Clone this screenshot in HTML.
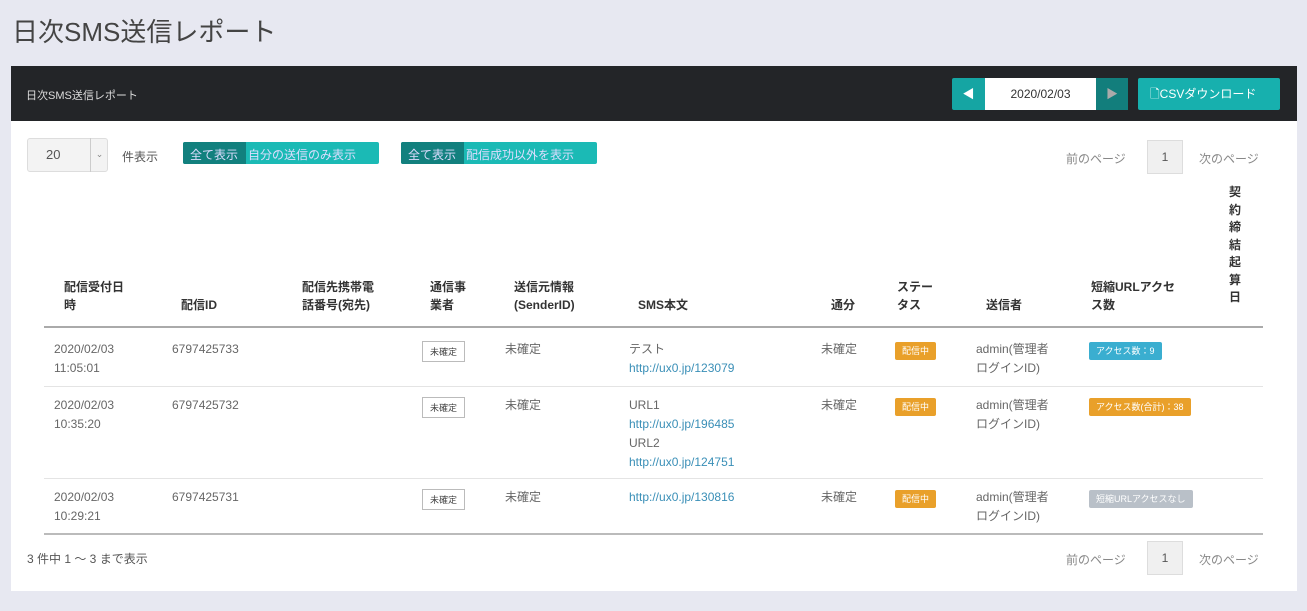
<!DOCTYPE html><html><head><meta charset="utf-8"><style>
*{margin:0;padding:0;box-sizing:border-box}
body{width:1307px;height:611px;background:#e7e8f1;font-family:"Liberation Sans","Noto Sans CJK JP",sans-serif;position:relative;overflow:hidden;color:#555}
.a{position:absolute;white-space:nowrap}
.h{font-size:12px;font-weight:bold;color:#333;line-height:18px}
.c{font-size:12px;color:#666;line-height:19px}
.l{color:#3a8fb7}
.b{font-size:9px;color:#fff;padding:3px 7px;border-radius:2px;line-height:12px}
.tag{font-size:9px;border:1px solid #bbb;padding:3px 7px;background:#fff;color:#444}
</style></head><body>
<div class="a" style="left:12px;top:12px;font-size:26px;color:#444">日次SMS送信レポート</div>
<div class="a" style="left:11px;top:66px;width:1286px;height:525px;background:#fff"></div>
<div class="a" style="left:11px;top:66px;width:1286px;height:55px;background:#232528"></div>
<div class="a" style="left:26px;top:87px;font-size:11px;color:#ddd">日次SMS送信レポート</div>
<div class="a" style="left:952px;top:78px;width:176px;height:32px;background:#15a5a3;border-radius:2px"></div>
<div class="a" style="left:952px;top:78px;width:33px;height:32px;color:#fff;font-size:12px;line-height:32px;text-align:center">◀</div>
<div class="a" style="left:985px;top:78px;width:111px;height:32px;background:#fff;font-size:12px;color:#333;text-align:center;line-height:32px">2020/02/03</div>
<div class="a" style="left:1096px;top:78px;width:32px;height:32px;background:#127e7c;color:#aaa;font-size:12px;line-height:32px;text-align:center">▶</div>
<div class="a" style="left:1138px;top:78px;width:142px;height:32px;background:#17b0ae;border-radius:2px;color:#fff;font-size:12px;line-height:32px;padding-left:12px">🗋CSVダウンロード</div>
<div class="a" style="left:27px;top:138px;width:81px;height:34px;background:#f3f3f3;border:1px solid #ddd;border-radius:3px;font-size:13px;line-height:32px;padding-left:18px;color:#555">20</div>
<div class="a" style="left:90px;top:138px;width:18px;height:34px;border-left:1px solid #ccc;font-size:9px;line-height:32px;text-align:center;color:#888">⌄</div>
<div class="a" style="left:122px;top:148px;font-size:12px">件表示</div>
<div class="a" style="left:183px;top:142px;width:196px;height:22px;background:#1bbab5;border-radius:2px"></div>
<div class="a" style="left:183px;top:142px;width:63px;height:22px;background:#12807e;border-radius:2px 0 0 2px"></div>
<div class="a" style="left:190px;top:146px;font-size:12px;color:#ddf">全て表示&nbsp;&nbsp;&nbsp;自分の送信のみ表示</div>
<div class="a" style="left:401px;top:142px;width:196px;height:22px;background:#1bbab5;border-radius:2px"></div>
<div class="a" style="left:401px;top:142px;width:63px;height:22px;background:#12807e;border-radius:2px 0 0 2px"></div>
<div class="a" style="left:408px;top:146px;font-size:12px;color:#ddf">全て表示&nbsp;&nbsp;&nbsp;配信成功以外を表示</div>
<div class="a" style="left:1066px;top:150px;font-size:12px;color:#888">前のページ</div>
<div class="a" style="left:1147px;top:140px;width:36px;height:34px;background:#f0f0f0;border:1px solid #ddd;text-align:center;line-height:32px;font-size:12px">1</div>
<div class="a" style="left:1199px;top:150px;font-size:12px;color:#888">次のページ</div>
<div class="a h" style="left:64px;top:278px">配信受付日<br>時</div>
<div class="a h" style="left:181px;top:296px">配信ID</div>
<div class="a h" style="left:302px;top:278px">配信先携帯電<br>話番号(宛先)</div>
<div class="a h" style="left:430px;top:278px">通信事<br>業者</div>
<div class="a h" style="left:514px;top:278px">送信元情報<br>(SenderID)</div>
<div class="a h" style="left:638px;top:296px">SMS本文</div>
<div class="a h" style="left:831px;top:296px">通分</div>
<div class="a h" style="left:897px;top:278px">ステー<br>タス</div>
<div class="a h" style="left:986px;top:296px">送信者</div>
<div class="a h" style="left:1091px;top:278px">短縮URLアクセ<br>ス数</div>
<div class="a h" style="left:1229px;top:184px;white-space:normal;width:13px;line-height:17.5px">契約締結起算日</div>
<div class="a" style="left:44px;top:326px;width:1219px;height:2px;background:#aaa"></div>
<div class="a" style="left:44px;top:386px;width:1219px;height:1px;background:#e4e4e4"></div>
<div class="a" style="left:44px;top:478px;width:1219px;height:1px;background:#e4e4e4"></div>
<div class="a" style="left:44px;top:533px;width:1219px;height:2px;background:#bbb"></div>
<div class="a c" style="left:54px;top:340px">2020/02/03<br>11:05:01</div>
<div class="a c" style="left:172px;top:340px">6797425733</div>
<div class="a tag" style="left:422px;top:341px">未確定</div>
<div class="a c" style="left:505px;top:340px">未確定</div>
<div class="a c" style="left:629px;top:340px">テスト<br><span class="l">http://ux0.jp/123079</span></div>
<div class="a c" style="left:821px;top:340px">未確定</div>
<div class="a b" style="left:895px;top:342px;background:#e9a02a">配信中</div>
<div class="a c" style="left:976px;top:340px">admin(管理者<br>ログインID)</div>
<div class="a b" style="left:1089px;top:342px;background:#3aaed0">アクセス数：9</div>
<div class="a c" style="left:54px;top:396px">2020/02/03<br>10:35:20</div>
<div class="a c" style="left:172px;top:396px">6797425732</div>
<div class="a tag" style="left:422px;top:397px">未確定</div>
<div class="a c" style="left:505px;top:396px">未確定</div>
<div class="a c" style="left:629px;top:396px">URL1<br><span class="l">http://ux0.jp/196485</span><br>URL2<br><span class="l">http://ux0.jp/124751</span></div>
<div class="a c" style="left:821px;top:396px">未確定</div>
<div class="a b" style="left:895px;top:398px;background:#e9a02a">配信中</div>
<div class="a c" style="left:976px;top:396px">admin(管理者<br>ログインID)</div>
<div class="a b" style="left:1089px;top:398px;background:#e9a02a">アクセス数(合計)：38</div>
<div class="a c" style="left:54px;top:488px">2020/02/03<br>10:29:21</div>
<div class="a c" style="left:172px;top:488px">6797425731</div>
<div class="a tag" style="left:422px;top:489px">未確定</div>
<div class="a c" style="left:505px;top:488px">未確定</div>
<div class="a c l" style="left:629px;top:488px">http://ux0.jp/130816</div>
<div class="a c" style="left:821px;top:488px">未確定</div>
<div class="a b" style="left:895px;top:490px;background:#e9a02a">配信中</div>
<div class="a c" style="left:976px;top:488px">admin(管理者<br>ログインID)</div>
<div class="a b" style="left:1089px;top:490px;background:#b9c0c8">短縮URLアクセスなし</div>
<div class="a" style="left:27px;top:550px;font-size:12px;color:#555">3 件中 1 ～ 3 まで表示</div>
<div class="a" style="left:1066px;top:551px;font-size:12px;color:#888">前のページ</div>
<div class="a" style="left:1147px;top:541px;width:36px;height:34px;background:#f0f0f0;border:1px solid #ddd;text-align:center;line-height:32px;font-size:12px">1</div>
<div class="a" style="left:1199px;top:551px;font-size:12px;color:#888">次のページ</div>
</body></html>
